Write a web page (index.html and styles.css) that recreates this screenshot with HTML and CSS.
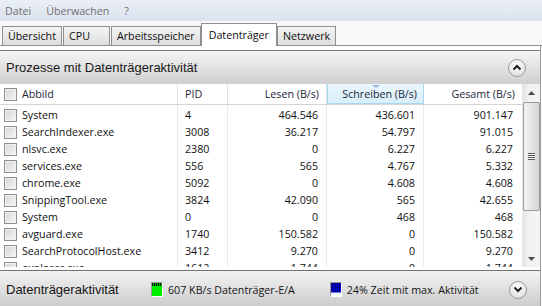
FILE: index.html
```html
<!DOCTYPE html>
<html lang="de">
<head>
<meta charset="utf-8">
<link rel="stylesheet" href="styles.css">
</head>
<body>
<div class="win">
  <div class="menubar"><span class="menu-item">Datei</span><span class="menu-item">Überwachen</span><span class="menu-item">?</span></div>
  <div class="tabstrip">
    <div class="tab">Übersicht</div>
    <div class="tab tab-wide">CPU</div>
    <div class="tab">Arbeitsspeicher</div>
    <div class="tab active">Datenträger</div>
    <div class="tab">Netzwerk</div>
  </div>
  <div class="panel">
    <div class="section-head">
      <span class="title">Prozesse mit Datenträgeraktivität</span>
      <span class="circle-btn"><svg width="10" height="7" viewBox="0 0 10 7"><path d="M1.5 5.5 L5 2 L8.5 5.5" fill="none" stroke="#1e1e1e" stroke-width="2"/></svg></span>
    </div>
    <div class="listview">
      <div class="table">
        <div class="row head">
          <div class="cell name"><span class="cb"></span>Abbild</div>
          <div class="cell pid">PID</div>
          <div class="cell num">Lesen (B/s)</div>
          <div class="cell num sorted"><span class="sort-arrow"></span>Schreiben (B/s)</div>
          <div class="cell num">Gesamt (B/s)</div>
        </div>
        <div class="tbody">
          <div class="row"><div class="cell name"><span class="cb"></span>System</div><div class="cell pid">4</div><div class="cell num">464.546</div><div class="cell num">436.601</div><div class="cell num">901.147</div></div>
          <div class="row"><div class="cell name"><span class="cb"></span>SearchIndexer.exe</div><div class="cell pid">3008</div><div class="cell num">36.217</div><div class="cell num">54.797</div><div class="cell num">91.015</div></div>
          <div class="row"><div class="cell name"><span class="cb"></span>nlsvc.exe</div><div class="cell pid">2380</div><div class="cell num">0</div><div class="cell num">6.227</div><div class="cell num">6.227</div></div>
          <div class="row"><div class="cell name"><span class="cb"></span>services.exe</div><div class="cell pid">556</div><div class="cell num">565</div><div class="cell num">4.767</div><div class="cell num">5.332</div></div>
          <div class="row"><div class="cell name"><span class="cb"></span>chrome.exe</div><div class="cell pid">5092</div><div class="cell num">0</div><div class="cell num">4.608</div><div class="cell num">4.608</div></div>
          <div class="row"><div class="cell name"><span class="cb"></span>SnippingTool.exe</div><div class="cell pid">3824</div><div class="cell num">42.090</div><div class="cell num">565</div><div class="cell num">42.655</div></div>
          <div class="row"><div class="cell name"><span class="cb"></span>System</div><div class="cell pid">0</div><div class="cell num">0</div><div class="cell num">468</div><div class="cell num">468</div></div>
          <div class="row"><div class="cell name"><span class="cb"></span>avguard.exe</div><div class="cell pid">1740</div><div class="cell num">150.582</div><div class="cell num">0</div><div class="cell num">150.582</div></div>
          <div class="row"><div class="cell name"><span class="cb"></span>SearchProtocolHost.exe</div><div class="cell pid">3412</div><div class="cell num">9.270</div><div class="cell num">0</div><div class="cell num">9.270</div></div>
          <div class="row"><div class="cell name"><span class="cb"></span>explorer.exe</div><div class="cell pid">1612</div><div class="cell num">1.744</div><div class="cell num">0</div><div class="cell num">1.744</div></div>
        </div>
      </div>
      <div class="scrollbar">
        <div class="sb-btn"><svg width="7" height="4" viewBox="0 0 7 4"><path d="M0 4 L3.5 0 L7 4 Z" fill="#4d4d4d"/></svg></div>
        <div class="sb-thumb"><span class="grip"></span></div>
        <div class="sb-track"></div>
        <div class="sb-btn"><svg width="7" height="4" viewBox="0 0 7 4"><path d="M0 0 L3.5 4 L7 0 Z" fill="#4d4d4d"/></svg></div>
      </div>
    </div>
    <div class="footer">
      <span class="title">Datenträgeraktivität</span>
      <span class="meter green"><span class="idle"></span><span class="fill"></span></span>
      <span class="stat stat-io">607 KB/s Datenträger-E/A</span>
      <span class="meter blue"><span class="idle"></span><span class="fill"></span></span>
      <span class="stat">24% Zeit mit max. Aktivität</span>
      <span class="circle-btn"><svg width="10" height="7" viewBox="0 0 10 7"><path d="M1.5 1.5 L5 5 L8.5 1.5" fill="none" stroke="#1e1e1e" stroke-width="2"/></svg></span>
    </div>
  </div>
</div>
</body>
</html>
```
FILE: styles.css
```css
* { box-sizing: border-box; }
html, body { margin: 0; padding: 0; }
body {
  width: 542px;
  height: 306px;
  overflow: hidden;
  background: #ffffff;
  font-family: "Open Sans", "Noto Sans", sans-serif;
  font-size: 10.7px;
  color: #111111;
}
.win { width: 542px; height: 306px; display: flex; flex-direction: column; }

.menubar {
  height: 21px;
  display: flex;
  align-items: center;
  padding-left: 5px;
  background: linear-gradient(#eaeff6, #dbe3ee);
  color: #707070;
}
.menu-item { margin-right: 15px; white-space: nowrap; }

.tabstrip {
  height: 25px;
  display: flex;
  align-items: flex-end;
  gap: 1px;
  padding-left: 2px;
  background: #f7f8f9;
  border-bottom: 1px solid #8d8f95;
}
.tab {
  height: 19px;
  padding: 0 5px;
  display: flex;
  align-items: center;
  border: 1px solid #8d8f95;
  border-bottom: none;
  background: linear-gradient(#f4f4f4, #dedede);
  color: #111;
  white-space: nowrap;
}
.tab-wide { min-width: 47px; }
.tab.active {
  height: 23px;
  margin: 0 -1px -1px;
  padding: 0 7px 1px;
  background: #ffffff;
  position: relative;
  z-index: 1;
}

.panel {
  flex: 1;
  display: flex;
  flex-direction: column;
  padding-top: 4px;
  border-right: 1px solid #9a9a9a;
  width: 541px;
}
.section-head {
  height: 34px;
  border-top: 1px solid #7a7a7a;
  background: linear-gradient(#f5f5f5, #cfcfcf);
  display: flex;
  align-items: center;
  justify-content: space-between;
  padding: 0 14px 0 6px;
  font-family: "Liberation Sans", Arial, sans-serif;
  font-size: 13px;
  color: #1a1a1a;
}
.circle-btn {
  width: 18px;
  height: 18px;
  border-radius: 50%;
  border: 1px solid #9c9c9c;
  background: radial-gradient(circle at 50% 35%, #ffffff, #e4e4e4 70%, #d2d2d2);
  display: flex;
  align-items: center;
  justify-content: center;
  flex: none;
}

.listview {
  display: flex;
  height: 183px;
}
.table { width: 522px; }
.row {
  display: grid;
  grid-template-columns: 178px 50px 99px 97px 98px;
  height: 17px;
  line-height: 17px;
}
.cell { white-space: nowrap; overflow: hidden; padding: 0 8px; }
.cell.name { display: flex; align-items: center; padding-left: 4px; }
.cell.pid { padding-left: 7px; }
.cell.num { text-align: right; padding-right: 9px; }
.cb {
  width: 13px;
  height: 13px;
  margin-right: 5px;
  border: 1px solid #8f8f8f;
  background: linear-gradient(135deg, #d6d6d6, #f6f6f6);
  box-shadow: inset 0 0 0 1px #f2f2f2;
  flex: none;
}

.row.head {
  height: 21px;
  line-height: 20px;
  border-bottom: 1px solid #d5d5d5;
  color: #1b2638;
}
.row.head .cell { border-right: 1px solid #e3e3e3; padding-right: 7px; }
.row.head .cell:last-child { border-right: none; }
.row.head .cell.sorted {
  position: relative;
  background: linear-gradient(#eaf6fd, #d9effa);
  border: 1px solid #a8d7ef;
  border-top: none;
  padding-right: 6px;
}
.sort-arrow {
  position: absolute;
  left: 44px;
  top: 1px;
  width: 0;
  height: 0;
  border-left: 4px solid transparent;
  border-right: 4px solid transparent;
  border-top: 3px solid #97b8d4;
}

.tbody {
  height: 162px;
  overflow: hidden;
  padding-top: 2px;
  background:
    linear-gradient(#e3ebf6, #e3ebf6) 177px 0 / 1px 100% no-repeat,
    linear-gradient(#e3ebf6, #e3ebf6) 227px 0 / 1px 100% no-repeat,
    linear-gradient(#e3ebf6, #e3ebf6) 326px 0 / 1px 100% no-repeat,
    linear-gradient(#e3ebf6, #e3ebf6) 423px 0 / 1px 100% no-repeat;
}

.scrollbar {
  width: 18px;
  display: flex;
  flex-direction: column;
  background: linear-gradient(90deg, #e4e4e4, #f3f3f3 40%, #f3f3f3);
  border-left: 1px solid #e6e6e6;
}
.sb-btn {
  height: 17px;
  display: flex;
  align-items: center;
  justify-content: center;
}
.sb-thumb {
  margin-top: 1px;
  height: 109px;
  border: 1px solid #9b9b9b;
  border-radius: 2px;
  background: linear-gradient(90deg, #f2f2f2, #e6e6e6 50%, #d6d6d6);
  display: flex;
  align-items: center;
  justify-content: center;
}
.grip {
  width: 7px;
  height: 7px;
  background: repeating-linear-gradient(#5e5e5e 0 1px, #f4f4f4 1px 2px);
}
.sb-track { flex: 1; }

.footer {
  margin-top: 3px;
  flex: 1;
  border-top: 1px solid #717171;
  background: linear-gradient(#f3f3f3, #cdcdcd);
  display: flex;
  align-items: center;
  padding: 2px 13px 0 6px;
  color: #151515;
  white-space: nowrap;
}
.footer .title {
  font-family: "Liberation Sans", Arial, sans-serif;
  font-size: 13px;
  width: 145px;
  flex: none;
}
.meter {
  width: 12px;
  height: 15px;
  border: 1px solid #9a9a9a;
  border-right-color: #ffffff;
  border-bottom-color: #ffffff;
  display: flex;
  flex-direction: column;
  margin-right: 5px;
  flex: none;
}
.meter.green .idle {
  height: 3px;
  background: repeating-linear-gradient(90deg, #111 0 1px, #00b000 1px 2px);
}
.meter.green .fill { flex: 1; background: #00f000; }
.meter.blue .idle {
  flex: 1;
  background:
    repeating-linear-gradient(90deg, #00008a 0 1px, transparent 1px 2px),
    repeating-linear-gradient(#00008a 0 1px, #0000ff 1px 2px);
}
.meter.blue .fill { height: 4px; background: linear-gradient(#e8eeff, #ffffff); border-top: 1px solid #7080ff; }
.stat { flex: none; }
.stat-io { margin-right: 35px; }
.footer .circle-btn { margin-left: auto; }
```
